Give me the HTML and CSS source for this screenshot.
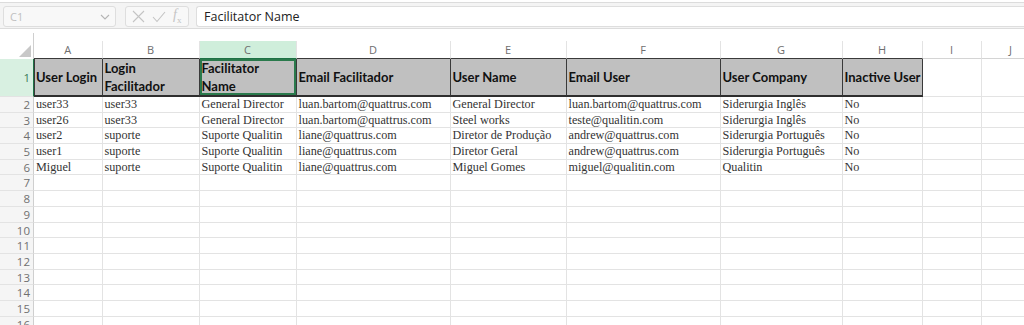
FILE: index.html
```html
<!DOCTYPE html>
<html lang="en">
<head>
  <meta charset="UTF-8">
  <title>Users sheet</title>
  <link rel="stylesheet" href="styles.css">
</head>
<body>
  <!-- formula bar -->
  <div class="toolbar">
    <div class="namebox">
      <span>C1</span>
      <svg width="10" height="6" viewBox="0 0 10 6"><path d="M1 1l4 4 4-4" fill="none" stroke="#b5b5b5" stroke-width="1.1"/></svg>
    </div>
    <div class="fxbox">
      <svg width="13" height="13" viewBox="0 0 13 13"><path d="M1 1l11 11M12 1L1 12" stroke="#c4c4c4" stroke-width="1.1"/></svg>
      <svg width="14" height="12" viewBox="0 0 14 12"><path d="M1 6l4 4.5L13 1" fill="none" stroke="#c4c4c4" stroke-width="1.1"/></svg>
      <span class="fx">f<sub>x</sub></span>
    </div>
    <div class="formula">Facilitator Name</div>
  </div>

  <div class="sheet-wrap">
    <div class="sheet" id="sheet">
      <div class="corner"><svg width="12" height="12" viewBox="0 0 12 12"><path d="M12 0V12H0z" fill="#c8c8c8"/></svg></div>
    </div>
  </div>

  <script>
    // column letters and sheet data
    const cols = ['A', 'B', 'C', 'D', 'E', 'F', 'G', 'H', 'I', 'J'];
    const headers = ['User Login', 'Login Facilitador', 'Facilitator Name', 'Email Facilitador',
      'User Name', 'Email User', 'User Company', 'Inactive User'];
    const rows = [
      ['user33', 'user33', 'General Director', 'luan.bartom@quattrus.com', 'General Director', 'luan.bartom@quattrus.com', 'Siderurgia Inglês', 'No'],
      ['user26', 'user33', 'General Director', 'luan.bartom@quattrus.com', 'Steel works', 'teste@qualitin.com', 'Siderurgia Inglês', 'No'],
      ['user2', 'suporte', 'Suporte Qualitin', 'liane@quattrus.com', 'Diretor de Produção', 'andrew@quattrus.com', 'Siderurgia Português', 'No'],
      ['user1', 'suporte', 'Suporte Qualitin', 'liane@quattrus.com', 'Diretor Geral', 'andrew@quattrus.com', 'Siderurgia Português', 'No'],
      ['Miguel', 'suporte', 'Suporte Qualitin', 'liane@quattrus.com', 'Miguel Gomes', 'miguel@qualitin.com', 'Qualitin', 'No']
    ];

    const sheet = document.getElementById('sheet');

    function cell(cls, text) {
      const div = document.createElement('div');
      div.className = cls;
      div.textContent = text || '';
      sheet.appendChild(div);
    }

    cols.forEach((c, i) => {
      let cls = 'colhead';
      if (i < 8) cls += ' over-title';
      if (c === 'C') cls += ' active';
      cell(cls, c);
    });

    // row 1: titles
    cell('rowhead active', '1');
    cols.forEach((c, i) => {
      if (i < 8) {
        let cls = 'cell title';
        if (i === 0) cls += ' first';
        if (c === 'C') cls += ' selected';
        cell(cls, headers[i]);
      } else {
        cell('cell');
      }
    });

    // rows 2..16
    for (let r = 2; r <= 16; r++) {
      cell('rowhead', r);
      const data = rows[r - 2] || [];
      cols.forEach((c, i) => cell('cell', data[i]));
    }
  </script>
</body>
</html>
```

FILE: styles.css
```css
* {
  box-sizing: border-box;
}

body {
  margin: 0;
  width: 1024px;
  height: 325px;
  overflow: hidden;
  background: #fff;
  font-family: "Open Sans", sans-serif;
}

/* formula bar */
.toolbar {
  margin-top: 2px;
  height: 27px;
  padding: 3px 0 0 3px;
  display: flex;
  gap: 9px;
  background: #f4f4f4;
  border-top: 1px solid #dcdcdc;
  border-bottom: 1px solid #dcdcdc;
}

.namebox, .fxbox, .formula {
  height: 21px;
  border: 1px solid #dedede;
  border-radius: 3px;
}

.namebox {
  width: 113px;
  display: flex;
  align-items: center;
  justify-content: space-between;
  padding: 0 5px 0 6px;
  background: #f8f8f8;
  color: #c0c0c0;
  font-size: 11px;
}

.fxbox {
  width: 64px;
  display: flex;
  align-items: center;
  gap: 7px;
  padding-left: 6px;
  background: #f8f8f8;
}

.fx {
  font-family: "Liberation Serif", serif;
  font-style: italic;
  font-size: 14px;
  color: #c4c4c4;
  line-height: 1;
}

.fx sub {
  font-size: 9px;
  font-style: normal;
}

.formula {
  flex: 1;
  margin-left: -2px;
  border-right: none;
  border-radius: 3px 0 0 3px;
  background: #fff;
  padding-left: 7px;
  font-size: 12.5px;
  line-height: 19px;
  color: #222;
}

/* grid */
.sheet-wrap {
  width: 1024px;
  overflow: hidden;
  padding-top: 12px;
}

.sheet {
  display: grid;
  width: 1041px;
  grid-template-columns: 34px 68.5px 97px 97px 154px 116px 154px 122px 80px 59px 59px;
  grid-template-rows: 18px 38px repeat(15, 15.7px);
  background: #fff;
}

.corner {
  display: flex;
  align-items: flex-end;
  justify-content: flex-end;
  padding: 0 2px 2px 0;
  border-right: 1px solid #cfcfcf;
  margin-top: -8px;
  height: 26px;
}

.colhead {
  text-align: center;
  font-size: 11px;
  line-height: 17px;
  color: #6e6e6e;
  border-right: 1px solid #e3e3e3;
  border-bottom: 1px solid #d4d4d4;
  background: #fff;
}

.colhead.over-title {
  border-bottom-color: #3a3a3a;
}

.colhead.active {
  background: #cfeedb;
  border-bottom: 1px solid #1e7145;
}

.rowhead {
  text-align: right;
  padding-right: 3px;
  font-size: 11.5px;
  line-height: 15px;
  color: #707070;
  background: #f5f5f5;
  border-right: 1px solid #cfcfcf;
  border-bottom: 1px solid #e3e3e3;
}

.rowhead.active {
  background: #d8f0e1;
  border-right: 1px solid #1e7145;
  color: #3d7a57;
  display: flex;
  align-items: center;
  justify-content: flex-end;
}

.cell {
  font-family: "Liberation Serif", serif;
  font-size: 12.2px;
  line-height: 15px;
  color: #333;
  padding-left: 2px;
  white-space: nowrap;
  border-right: 1px solid #e3e3e3;
  border-bottom: 1px solid #e3e3e3;
}

.cell.title {
  display: flex;
  align-items: center;
  white-space: normal;
  font-family: Lato, sans-serif;
  font-weight: bold;
  font-size: 13px;
  line-height: 18px;
  color: #111;
  background: #c0c0c0;
  border-right: 1px solid #3a3a3a;
  border-bottom: 2px solid #2e2e2e;
}

.cell.title.first {
  box-shadow: inset 1px 0 0 #3a3a3a;
}

.cell.title.selected {
  box-shadow: inset 0 0 0 2px #2a7a4c;
}
```
